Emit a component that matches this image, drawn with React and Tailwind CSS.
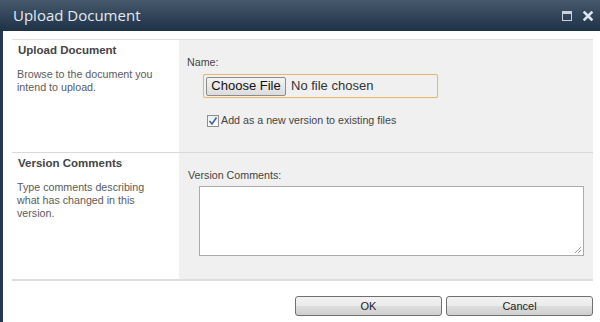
import React from "react";

export default function App() {
  const sans = { fontFamily: '"Liberation Sans", Arial, sans-serif' };
  return (
    <div className="w-[600px] h-[322px] bg-white flex flex-col overflow-hidden" style={sans}>
      {/* Title bar */}
      <div className="h-[31px] shrink-0 flex items-center justify-between bg-gradient-to-b from-[#46596d] to-[#1e3247] pl-[13px] pr-[7px]">
        <span className="text-[15px] text-[#e4eaf1] leading-none" style={{ fontFamily: '"Open Sans", sans-serif' }}>
          Upload Document
        </span>
        <div className="flex items-center gap-[11px]">
          <svg width="10" height="10" viewBox="0 0 10 10">
            <rect x="0.5" y="0.5" width="9" height="9" fill="none" stroke="#c9d2dc" strokeWidth="1" />
            <rect x="1" y="1" width="8" height="2" fill="#c9d2dc" />
          </svg>
          <svg width="10" height="10" viewBox="0 0 10 10">
            <path d="M1.5 1.5 L8.5 8.5 M8.5 1.5 L1.5 8.5" stroke="#dde3ea" strokeWidth="2.6" strokeLinecap="square" />
          </svg>
        </div>
      </div>

      {/* Body */}
      <div className="flex flex-1">
        <div className="w-[3px] bg-[#24384e]" />
        <div className="flex-1 flex flex-col pl-[9px] pr-[7px] pt-[8px]">
          <div className="border-t border-[#e1e1e1]" />

          {/* Section 1 */}
          <div className="grid grid-cols-[167px_1fr] h-[112px]">
            <div className="pl-[6px] pt-[4px]">
              <div className="text-[11.5px] leading-[13px] font-bold text-[#444]">Upload Document</div>
              <div className="mt-[11px] text-[10.7px] leading-[13px] text-[#5b5b5b] -ml-[1px]">
                Browse to the document you
                <br />
                intend to upload.
              </div>
            </div>
            <div className="bg-[#f0f0f0] pl-[8px] pt-[16px]">
              <div className="text-[10.7px] leading-[13px] text-[#444]">Name:</div>
              <div className="mt-[5px] ml-[16px] w-[235px] h-[24px] border border-[#e9b96a] rounded-[2px] bg-[#f0f0f0] flex items-center pl-[2px] shadow-[0_0_1px_#f1c98a]">
                <div className="h-[19px] w-[80px] rounded-[2px] border border-[#8c8c8c] bg-gradient-to-b from-[#f4f4f4] to-[#dcdcdc] flex items-center justify-center text-[13px] text-[#111]">
                  Choose File
                </div>
                <span className="ml-[5px] text-[13px] text-[#333]">No file chosen</span>
              </div>
              <div className="mt-[16px] ml-[20px] flex items-center">
                <div className="w-[12px] h-[12px] border border-[#8e8f8f] bg-gradient-to-b from-[#e8eef4] to-[#ffffff] flex items-center justify-center">
                  <svg width="10" height="10" viewBox="0 0 10 10">
                    <path d="M1.5 5 L4 8 L8.5 1.5" fill="none" stroke="#4a5f97" strokeWidth="1.6" />
                  </svg>
                </div>
                <span className="ml-[2px] text-[10.7px] leading-[13px] text-[#444]">Add as a new version to existing files</span>
              </div>
            </div>
          </div>

          <div className="border-t border-[#d9d9d9]" />

          {/* Section 2 */}
          <div className="grid grid-cols-[167px_1fr] h-[126px]">
            <div className="pl-[6px] pt-[4px]">
              <div className="text-[11.5px] leading-[13px] font-bold text-[#444]">Version Comments</div>
              <div className="mt-[11px] text-[10.7px] leading-[13px] text-[#5b5b5b] -ml-[1px]">
                Type comments describing
                <br />
                what has changed in this
                <br />
                version.
              </div>
            </div>
            <div className="bg-[#f0f0f0] pl-[9px] pt-[16px]">
              <div className="text-[10.7px] leading-[13px] text-[#444]">Version Comments:</div>
              <div className="mt-[4px] ml-[11px] w-[385px] h-[70px] border border-[#ababab] bg-white relative">
                <svg className="absolute right-[1px] bottom-[1px]" width="8" height="8" viewBox="0 0 8 8">
                  <path d="M7 1 L1 7 M7 4 L4 7" stroke="#9a9a9a" strokeWidth="1" />
                </svg>
              </div>
            </div>
          </div>

          <div className="h-[2px] bg-[#dedede]" />

          {/* Buttons */}
          <div className="flex justify-end gap-[4px] pt-[15px]">
            <div className="w-[147px] h-[20px] rounded-[3px] border border-[#707070] bg-[linear-gradient(to_bottom,#f2f2f2_0%,#ebebeb_50%,#dddddd_51%,#cfcfcf_100%)] flex items-center justify-center text-[11px] text-[#222]">
              OK
            </div>
            <div className="w-[147px] h-[20px] rounded-[3px] border border-[#707070] bg-[linear-gradient(to_bottom,#f2f2f2_0%,#ebebeb_50%,#dddddd_51%,#cfcfcf_100%)] flex items-center justify-center text-[11px] text-[#222]">
              Cancel
            </div>
          </div>
        </div>
      </div>
    </div>
  );
}
